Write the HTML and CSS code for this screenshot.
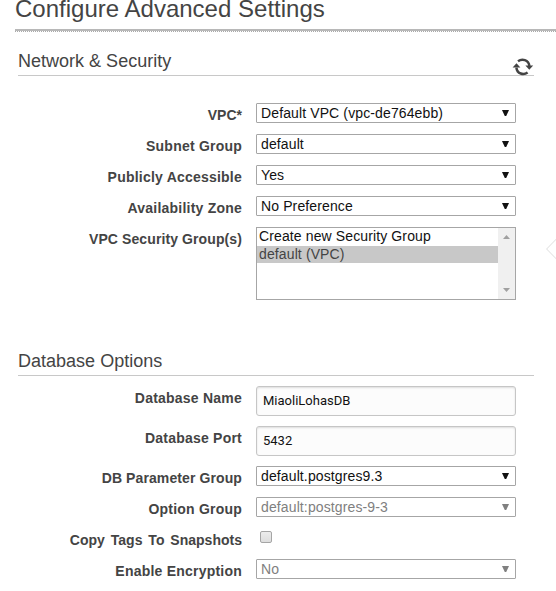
FILE: index.html
```
<!DOCTYPE html>
<html lang="en">
<head>
<meta charset="utf-8">
<title>Configure Advanced Settings</title>
<link rel="stylesheet" href="styles.css">
</head>
<body>
<main class="page">
  <h1 class="title">Configure Advanced Settings</h1>
  <section class="section network">
    <header class="heading">
      <h2>Network &amp; Security</h2>
      <svg class="refresh" width="22" height="18" viewBox="0 0 22 18">
        <path d="M6 3.2C10 .4 16.6 1.6 17.4 8M15.6 14.4C11.6 17.4 5 16 4.4 9.6" fill="none" stroke="#444" stroke-width="2.5"/>
        <path d="M13.4 7.6h7.8l-3.9 4.2zM.6 9.4h7.8L4.5 5.2z" fill="#444"/>
      </svg>
    </header>
    <div class="row"><span class="label tight">VPC*</span><div class="select"><span>Default VPC (vpc-de764ebb)</span><i class="arrow"></i></div></div>
    <div class="row"><span class="label">Subnet Group</span><div class="select"><span>default</span><i class="arrow"></i></div></div>
    <div class="row"><span class="label">Publicly Accessible</span><div class="select"><span>Yes</span><i class="arrow"></i></div></div>
    <div class="row"><span class="label">Availability Zone</span><div class="select"><span>No Preference</span><i class="arrow"></i></div></div>
    <div class="row"><span class="label snug">VPC Security Group(s)</span>
      <div class="listbox">
        <div class="options"><div class="option">Create new Security Group</div><div class="option selected">default (VPC)</div></div>
        <div class="scrollbar"><i class="up"></i><i class="down"></i></div>
      </div>
    </div>
  </section>
  <section class="section database">
    <header class="heading"><h2>Database Options</h2></header>
    <div class="row tall"><span class="label">Database Name</span><div class="input">MiaoliLohasDB</div></div>
    <div class="row tall"><span class="label">Database Port</span><div class="input">5432</div></div>
    <div class="row"><span class="label snug">DB Parameter Group</span><div class="select"><span>default.postgres9.3</span><i class="arrow"></i></div></div>
    <div class="row"><span class="label">Option Group</span><div class="select disabled"><span>default:postgres-9-3</span><i class="arrow"></i></div></div>
    <div class="row"><span class="label tight spaced">Copy Tags To Snapshots</span><div class="checkbox"></div></div>
    <div class="row"><span class="label">Enable Encryption</span><div class="select disabled"><span>No</span><i class="arrow"></i></div></div>
  </section>
  <svg class="pointer" width="10" height="20" viewBox="0 0 10 20"><path d="M10.5 -.1.6 10l9.9 10.1" fill="none" stroke="#ddd"/></svg>
</main>
</body>
</html>
```
FILE: styles.css
```
* { box-sizing: border-box; }
body { margin: 0; background: #fff; color: #444; font-family: "Liberation Sans", Arial, sans-serif; overflow: hidden; }
.page { position: relative; width: 556px; height: 591px; overflow: hidden; }
.title { margin: 0 0 0 15px; height: 31px; font-size: 24px; font-weight: 400; line-height: 17px; letter-spacing: .01px; border-bottom: 2px solid #b8b8b8; position: relative; }
.title::after { content: ""; position: absolute; left: 0; right: 0; top: 31px; height: 1px; background: repeating-linear-gradient(90deg, #aaa 0 1px, #fff 1px 2px); }
.heading { display: flex; justify-content: space-between; align-items: flex-start; margin-left: 18px; width: 516px; height: 26px; border-bottom: 1px solid #c8c8c8; }
.heading h2 { margin: 0; font-size: 18px; font-weight: 400; line-height: 22px; letter-spacing: .01px; }
.refresh { flex: none; margin-top: 8px; overflow: visible; }
.network { padding-top: 19px; height: 319px; }
.network .heading { margin-bottom: 27px; }
.database .heading { margin-bottom: 10px; }
.row { display: grid; grid-template-columns: 242px 260px; column-gap: 14px; height: 31px; align-items: start; }
.row.tall { height: 40px; }
.label { padding-top: 4px; text-align: right; font-size: 14px; font-weight: 700; line-height: 17px; letter-spacing: .22px; white-space: nowrap; }
.snug { letter-spacing: .1px; }
.tight { letter-spacing: .01px; }
.spaced { word-spacing: 2px; }
.select { display: flex; justify-content: space-between; align-items: center; height: 20px; border: 1px solid #a6a6a6; border-radius: 1px; padding: 0 6px 0 4px; background: #fff; color: #111; font-size: 14px; line-height: 18px; letter-spacing: .12px; white-space: nowrap; }
.arrow { width: 7px; height: 6px; background: currentColor; clip-path: polygon(0 0, 100% 0, 60% 100%, 40% 100%); }
.disabled { color: #808080; }
.listbox { display: flex; height: 73px; border: 1px solid #a6a6a6; font-size: 14px; color: #111; letter-spacing: .12px; }
.options { flex: 1; }
.option { height: 18px; padding-left: 2px; line-height: 17px; }
.selected { background: #c8c8c8; color: #444; height: 17px; }
.scrollbar { display: flex; flex-direction: column; justify-content: space-between; align-items: center; width: 17px; padding: 7px 0; background: #f0f0f0; }
.scrollbar i { width: 7px; height: 4px; background: #a0a0a0; }
.up { clip-path: polygon(50% 0, 100% 100%, 0 100%); }
.down { clip-path: polygon(0 0, 100% 0, 50% 100%); }
.input { height: 30px; border: 1px solid #c6c6c6; border-radius: 3px; background: #fcfcfc; box-shadow: inset 0 1px 2px #ddd; padding: 1px 6px 0; color: #111; font: 13px/26px Roboto, sans-serif; }
.checkbox { width: 12px; height: 12px; margin: 3px 0 0 4px; border: 1px solid #a5a5a5; border-radius: 2px; background: linear-gradient(#ececec, #ddd); }
.pointer { position: absolute; right: 0; top: 239px; }
```
